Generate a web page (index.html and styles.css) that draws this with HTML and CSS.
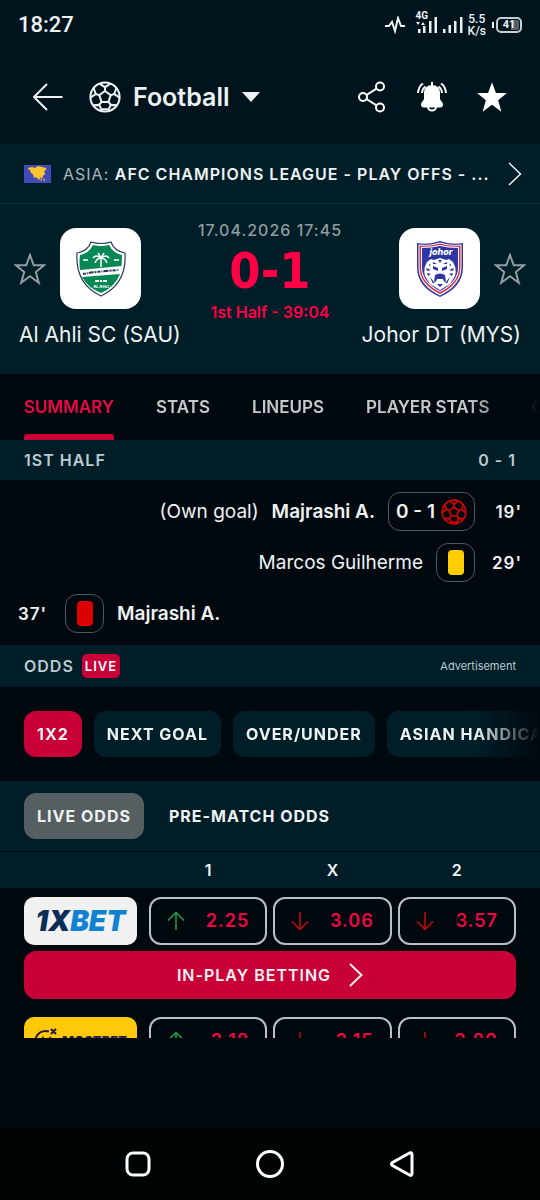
FILE: index.html
```html
<!DOCTYPE html>
<html lang="en">
<head>
    <meta charset="UTF-8">
    <meta name="viewport" content="width=device-width, initial-scale=1.0">
    <title>Al Ahli SC - Johor DT</title>
    <link rel="stylesheet" href="styles.css">
</head>
<body>
    <!-- shared icons -->
    <svg class="sprite" aria-hidden="true">
        <symbol id="ball" viewBox="0 0 32 32">
            <circle cx="16" cy="16" r="14.6"/>
            <path d="M16 10l5.7 4.1-2.2 6.8h-7l-2.2-6.8z"/>
            <path d="M16 10V6.2M21.7 14.1l3.6-1.1M19.5 20.9l2.3 3M12.5 20.9l-2.3 3M10.3 14.1L6.7 13"/>
            <path d="M10.6 2.6L16 6.2l5.4-3.6M27.4 6.8L25.3 13l5.2 3.6M28 24.2l-6.2-.3-2.2 4.6-.4 1.6M4 24.2l6.2-.3 2.2 4.6.4 1.6M4.6 6.8L6.7 13l-5.2 3.6M12.4 28.3h7.2"/>
        </symbol>
        <symbol id="star" viewBox="0 0 32 32">
            <path d="M16 2l3.7 10.300h10.300l-8.200 6.800 3 10.700L16 23.300l-8.800 6.500 3-10.700L2 12.300h10.300z"/>
        </symbol>
        <symbol id="chevron" viewBox="0 0 14 24">
            <path d="M1 1l11.500 11L1 23"/>
        </symbol>
        <symbol id="up" viewBox="0 0 18 20">
            <path d="M9 19V1.500M1 9.500l8-8 8 8"/>
        </symbol>
        <symbol id="down" viewBox="0 0 18 20">
            <path d="M9 1v17.500M1 10.500l8 8 8-8"/>
        </symbol>
    </svg>

    <div class="status-bar">
        <span class="clock">18:27</span>
        <div class="status-icons">
            <svg class="line" width="22" height="18" viewBox="0 0 22 18"><path d="M1 10h4l3-4 3 9 3-13 3 8h4"/></svg>
            <div class="signal">
                <span class="net">4G</span>
                <svg width="22" height="16" viewBox="0 8 22 16"><path d="M2 20h2.500v4H2zM7 17h2.500v7H7zM13 12h2.500v12H13zM18.500 8H21v16h-2.500zM0 13h4l-2 3zM5 16h4l-2-3z"/></svg>
            </div>
            <svg class="bars" width="20" height="16" viewBox="0 0 20 16"><path d="M0 12h2.500v4H0zM5.500 8H8v8H5.500zM11 4h2.500v12H11zM17 0h2.500v16H17z"/></svg>
            <span class="speed">5.5<br>K/s</span>
            <div class="battery"><span class="battery-level">41</span></div>
        </div>
    </div>

    <header class="app-bar">
        <button class="icon-btn" aria-label="Back">
            <svg class="line" width="30" height="28" viewBox="0 0 30 28"><path d="M29.500 14H1M14 1L1 14l13 13"/></svg>
        </button>
        <button class="sport">
            <svg class="line" width="32" height="32"><use href="#ball"/></svg>
            <span>Football</span>
            <svg class="fill" width="18" height="10" viewBox="0 0 18 10"><path d="M0 0h18L9 10z"/></svg>
        </button>
        <div class="actions">
            <button class="icon-btn" aria-label="Share">
                <svg class="line" width="30" height="32" viewBox="0 0 30 32"><circle cx="6" cy="16" r="4"/><circle cx="23" cy="5.500" r="4"/><circle cx="23" cy="26.500" r="4"/><path d="M9.500 14l10-6.300M9.500 18l10 6.300"/></svg>
            </button>
            <button class="icon-btn" aria-label="Notifications">
                <svg class="line" width="32" height="32" viewBox="0 0 32 32">
                    <path class="solid" d="M16 5c-4.500 0-7 3-7 7v6c0 2-3 3.500-3 5.500 0 1.500 1 2 2 2h16c1 0 2-.5 2-2 0-2-3-3.500-3-5.500v-6c0-4-2.500-7-7-7z"/>
                    <path d="M16 1v4M12 26a4 3.500 0 0 0 8 0M7 2.500Q2.500 5.500 2 12M9.500 5.500Q6.500 7.500 6 12M25 2.500q4.500 3 5 9.500M22.500 5.500q3 2 3.500 6.500"/>
                </svg>
            </button>
            <button class="icon-btn" aria-label="Favourite match">
                <svg class="fill" width="34" height="34"><use href="#star"/></svg>
            </button>
        </div>
    </header>

    <a class="league" href="#">
        <svg class="flag" width="27" height="18" viewBox="0 0 27 18">
            <path fill="#434bb8" d="M0 0h27v18H0z"/>
            <path fill="#fdc52c" d="M4 3l4-1 3 1 3-2 4 1 4 1v2l-2 1 1 3-2 2-1 3-2-2-1 3-3-3-2 1-1-4-2-1-1-3-2-1zM15 13l3 2v1l-3-2zM20 13l1 3-2-1z"/>
        </svg>
        <span class="league-name">ASIA: <b>AFC CHAMPIONS LEAGUE - PLAY OFFS - ...</b></span>
        <svg class="line" width="14" height="24"><use href="#chevron"/></svg>
    </a>

    <section class="match">
        <div class="side home">
            <button class="fav" aria-label="Favourite Al Ahli SC"><svg width="32" height="32"><use href="#star"/></svg></button>
            <div class="crest">
                <svg width="52" height="58" viewBox="0 0 52 58">
                    <path fill="#fff" stroke="#26365c" stroke-width="1.200" d="M16 2q10 3 20 0 3 9 14 11 2 31-24 43Q0 44 2 13q11-2 14-11z"/>
                    <path fill="#078854" d="M18 5q8 2 16 0 4 8 13 10 0 5-.5 11L5 30Q4 22 5 15q9-2 13-10z"/>
                    <path fill="#078854" d="M7 37l38-3Q40 47 26 53 13 48 7 37z"/>
                    <path stroke="#fff" stroke-width="1.500" fill="none" d="M26 27V17M26 18q-5-4-8 0M26 18q5-4 8 0M26 18q-4 0-6 5M26 18q4 0 6 5M26 18l-3-5M26 18l3-5M8 20h5M39 20h5"/>
                    <path stroke="#26365c" stroke-width="2" stroke-dasharray="3 1 1 1 5 1 2 1" fill="none" d="M8 34q17-3 36-4"/>
                    <path stroke="#fff" stroke-width="2" stroke-dasharray="4 1 2 1" fill="none" d="M20 41h12"/>
                    <text x="26" y="48" class="crest-name">AL AHLI</text>
                </svg>
            </div>
            <h2 class="team">Al Ahli SC (SAU)</h2>
        </div>
        <div class="result">
            <time class="kickoff">17.04.2026 17:45</time>
            <div class="score">0-1</div>
            <div class="stage">1st Half - 39:04</div>
        </div>
        <div class="side away">
            <div class="crest">
                <svg width="48" height="56" viewBox="0 0 48 56">
                    <path fill="#2e36a3" d="M1 2q12 2 23-2 11 4 23 2v24q0 20-23 30Q1 46 1 26z"/>
                    <path fill="#fff" d="M2.500 3.500q11 1.500 21.500-2 10 3.500 21.500 2V26q0 18-21.500 28.500Q2.500 44 2.500 26z"/>
                    <path fill="#dc2f4a" d="M3.500 4.500q10 1 20.500-2 10 3 20.500 2V26q0 17-20.500 27Q3.500 43 3.500 26z"/>
                    <path fill="#fff" d="M5 6q10 0 19-2 9 2 19 2v20q0 16-19 25Q5 42 5 26z"/>
                    <path fill="#2e36a3" d="M6 7q10 0 18-2 8 2 18 2v19q0 15-18 24Q6 41 6 26z"/>
                    <text x="25" y="14" class="johor">johor</text>
                    <path fill="#fff" d="M11 21l4-3 3 1 6-2 6 2 3-1 4 3q4 7 2 14l-5 8-10 6-10-6-5-8q-2-7 2-14z"/>
                    <path fill="#2e36a3" d="M17 25l5 2v3l-5-2zM31 25l-5 2v3l5-2zM19 34q5-3 10 0l1 8q-3-2-3-4h-6q0 2-3 4zM10 27l5 2-4 1zM38 27l-5 2 4 1zM11 32l4 1-3 2zM37 32l-4 1 3 2zM17 21l4 2h-4zM31 21l-4 2h4zM22 19h4l-2 3zM14 36l4 5-1 2zM34 36l-4 5 1 2zM21 43h6l-3 3zM13 23l2 1-2 1zM35 23l-2 1 2 1z"/>
                </svg>
            </div>
            <button class="fav" aria-label="Favourite Johor DT"><svg width="32" height="32"><use href="#star"/></svg></button>
            <h2 class="team">Johor DT (MYS)</h2>
        </div>
    </section>

    <nav class="tabs">
        <a class="tab active" href="#">SUMMARY</a>
        <a class="tab" href="#">STATS</a>
        <a class="tab" href="#">LINEUPS</a>
        <a class="tab" href="#">PLAYER STATS</a>
        <a class="tab" href="#">ODDS</a>
    </nav>

    <main class="content">
        <h3 class="section-head"><span>1ST HALF</span><span>0 - 1</span></h3>
        <ul class="events">
            <li class="event event-away">
                <span class="note">(Own goal)</span>
                <b>Majrashi A.</b>
                <span class="incident"><b>0 - 1</b><svg class="own-goal" width="26" height="26"><use href="#ball"/></svg></span>
                <span class="minute">19'</span>
            </li>
            <li class="event event-away">
                <span>Marcos Guilherme</span>
                <span class="incident"><i class="card yellow"></i></span>
                <span class="minute">29'</span>
            </li>
            <li class="event">
                <span class="minute">37'</span>
                <span class="incident"><i class="card red"></i></span>
                <b>Majrashi A.</b>
            </li>
        </ul>

        <h3 class="section-head odds-head"><span class="odds-title">ODDS</span><span class="live">LIVE</span><small>Advertisement</small></h3>
        <div class="markets">
            <button class="pill selected">1X2</button>
            <button class="pill">NEXT GOAL</button>
            <button class="pill">OVER/UNDER</button>
            <button class="pill">ASIAN HANDICAP</button>
        </div>
        <div class="odds-type">
            <button class="pill current">LIVE ODDS</button>
            <button class="pill">PRE-MATCH ODDS</button>
        </div>
        <div class="odds-row columns">
            <span></span><span>1</span><span>X</span><span>2</span>
        </div>
        <div class="bookmaker">
            <div class="odds-row">
                <a class="logo xbet" href="#"><span>1X</span><em>BET</em></a>
                <button class="odd rise"><svg width="18" height="20"><use href="#up"/></svg>2.25</button>
                <button class="odd"><svg width="18" height="20"><use href="#down"/></svg>3.06</button>
                <button class="odd"><svg width="18" height="20"><use href="#down"/></svg>3.57</button>
            </div>
            <button class="in-play">IN-PLAY BETTING <svg class="line" width="14" height="24"><use href="#chevron"/></svg></button>
        </div>
        <div class="bookmaker">
            <div class="odds-row">
                <a class="logo mostbet" href="#">
                    <svg width="26" height="26" viewBox="0 0 26 26"><path d="M15 3.500A10.500 10.500 0 1 0 22 12M7 16l2-6 3 4 4-4 1 6M17 1l5 5M22 1l-5 5"/></svg>
                    <span>MOSTBET</span>
                </a>
                <button class="odd rise"><svg width="18" height="20"><use href="#up"/></svg>2.18</button>
                <button class="odd"><svg width="18" height="20"><use href="#down"/></svg>3.15</button>
                <button class="odd"><svg width="18" height="20"><use href="#down"/></svg>3.80</button>
            </div>
        </div>
    </main>

    <div class="ad-slot"></div>

    <div class="system-nav">
        <button class="icon-btn" aria-label="Recent apps"><svg width="28" height="28" viewBox="0 0 28 28"><rect x="3" y="3" width="22" height="22" rx="6"/></svg></button>
        <button class="icon-btn" aria-label="Home"><svg width="28" height="28" viewBox="0 0 28 28"><circle cx="14" cy="14" r="12.500"/></svg></button>
        <button class="icon-btn" aria-label="System back"><svg width="28" height="28" viewBox="0 0 28 28"><path d="M24 4.500v19q0 2.500-2.500 1.500L4.500 15.500q-2-1.500 0-3L21.500 3q2.500-1 2.500 1.500z"/></svg></button>
    </div>
</body>
</html>
```

FILE: styles.css
```css
* {
    box-sizing: border-box;
}
body {
    display: flex;
    flex-direction: column;
    height: 100vh;
    margin: 0;
    overflow: hidden;
    background-color: #01090f;
    color: #eef2f3;
    font-family: Inter, "Liberation Sans", sans-serif;
    font-size: 16px;
    line-height: 20px;
}
a {
    color: inherit;
    text-decoration: none;
}
button {
    padding: 0;
    border: none;
    background: none;
    color: inherit;
    font: inherit;
    cursor: pointer;
}
b {
    font-weight: 600;
}
svg {
    display: block;
    flex: none;
}
.sprite {
    position: absolute;
    width: 0;
    height: 0;
}
.line {
    fill: none;
    stroke: currentColor;
    stroke-width: 2;
}
.fill, .solid {
    fill: currentColor;
}

/* phone status bar */
.status-bar {
    display: flex;
    flex: none;
    justify-content: space-between;
    align-items: center;
    height: 50px;
    padding: 0 18px;
    background-color: #00141e;
    font-family: Roboto, sans-serif;
    font-weight: 500;
}
.clock {
    font-size: 22px;
}
.status-icons {
    display: flex;
    align-items: center;
    gap: 5px;
}
.status-icons svg {
    fill: currentColor;
}
.status-icons .line {
    fill: none;
    margin-right: 5px;
}
.signal {
    position: relative;
}
.net {
    position: absolute;
    top: -7px;
    left: 0;
    font-size: 10px;
    font-weight: 700;
    line-height: 12px;
}
.speed {
    font-size: 12px;
    line-height: 12px;
    text-align: center;
}
.battery {
    position: relative;
    margin-left: 5px;
    padding: 1px;
    border: 2px solid #c5cdd3;
    border-radius: 5px;
}
.battery::before {
    content: "";
    position: absolute;
    top: 3px;
    left: -6px;
    width: 2px;
    height: 6px;
    background-color: #fff;
}
.battery-level {
    display: block;
    width: 20px;
    border-radius: 2px;
    background: linear-gradient(90deg, transparent 60%, #55616a 60%);
    font-size: 11px;
    font-weight: 700;
    line-height: 10px;
    text-align: center;
}

.app-bar {
    display: flex;
    flex: none;
    align-items: center;
    height: 94px;
    padding: 0 32px 0 33px;
    background-color: #00141e;
}
.sport {
    display: flex;
    align-items: center;
    gap: 12px;
    margin-left: 26px;
    font-size: 25px;
    font-weight: 600;
    line-height: 32px;
}
.actions {
    display: flex;
    gap: 28px;
    margin-left: auto;
    color: #fff;
}
.actions .icon-btn {
    display: flex;
    justify-content: center;
    align-items: center;
    width: 32px;
}

.league {
    display: flex;
    flex: none;
    align-items: center;
    gap: 12px;
    height: 60px;
    padding: 0 18px 0 24px;
    border-bottom: 1px solid #0f2d37;
    background-color: #001e28;
}
.league .line {
    stroke-width: 1.5;
}
.league-name {
    flex: 1;
    overflow: hidden;
    color: #a9b7bc;
    letter-spacing: 1px;
    white-space: nowrap;
}
.league-name b {
    color: #eef2f3;
}

.match {
    display: flex;
    flex: none;
    justify-content: space-between;
    height: 170px;
    padding: 16px 14px 0;
    background-color: #001e28;
}
.side {
    display: flex;
    flex: 1 0 0;
    flex-wrap: wrap;
    align-content: flex-start;
    align-items: center;
    gap: 8px 14px;
    padding-top: 8px;
}
.away {
    justify-content: flex-end;
}
.fav svg {
    fill: none;
    stroke: #929ca0;
    stroke-width: 2;
}
.crest {
    display: flex;
    justify-content: center;
    align-items: center;
    width: 81px;
    height: 81px;
    border-radius: 16px;
    background-color: #fff;
}
.crest-name {
    fill: #fff;
    font-size: 4px;
    font-weight: 800;
    text-anchor: middle;
}
.johor {
    fill: #fff;
    font-size: 9px;
    font-style: italic;
    font-weight: 800;
    text-anchor: middle;
}
.team {
    width: 100%;
    margin: 0;
    padding: 0 5px;
    font-size: 21px;
    font-weight: 400;
    line-height: 36px;
    white-space: nowrap;
}
.away .team {
    text-align: right;
}
.result {
    text-align: center;
}
.kickoff {
    display: block;
    color: #929ca0;
    font-weight: 500;
    letter-spacing: 1px;
}
.score {
    color: #ff0046;
    font-family: "DejaVu Sans Condensed", "DejaVu Sans", sans-serif;
    font-size: 50px;
    font-weight: 700;
    line-height: 62px;
}
.stage {
    color: #ff0046;
    font-weight: 600;
}

.tabs {
    display: flex;
    flex: none;
    gap: 42px;
    height: 66px;
    padding: 0 24px;
    overflow: hidden;
    color: #c4c9cc;
    font-size: 17px;
    font-weight: 600;
    white-space: nowrap;
    -webkit-mask-image: linear-gradient(90deg, #000 calc(100% - 72px), transparent);
    mask-image: linear-gradient(90deg, #000 calc(100% - 72px), transparent);
}
.tab {
    position: relative;
    flex: none;
    line-height: 66px;
}
.tab.active {
    color: #f20547;
}
.tab.active::after {
    content: "";
    position: absolute;
    right: 0;
    bottom: 0;
    left: 0;
    height: 6px;
    border-radius: 3px 3px 0 0;
    background-color: #c80037;
}

.content {
    flex: 1;
    min-height: 0;
    overflow: hidden;
}
.section-head {
    display: flex;
    justify-content: space-between;
    align-items: center;
    height: 40px;
    margin: 0;
    padding: 0 24px;
    background-color: #001e28;
    color: #bccbcf;
    font-size: 16px;
    font-weight: 600;
    letter-spacing: 1px;
}
.events {
    display: flex;
    flex-direction: column;
    gap: 12px;
    margin: 0;
    padding: 12px 18px;
    list-style: none;
    font-size: 19px;
}
.event {
    display: flex;
    align-items: center;
    gap: 13px;
}
.event-away {
    justify-content: flex-end;
}
.incident {
    display: flex;
    justify-content: center;
    align-items: center;
    gap: 6px;
    min-width: 39px;
    height: 39px;
    padding: 0 7px;
    border: 1px solid #4d595f;
    border-radius: 12px;
}
.own-goal {
    fill: none;
    stroke: #d80000;
    stroke-width: 2;
}
.card {
    width: 16px;
    height: 25px;
    border-radius: 4px;
}
.yellow {
    background-color: #ffcd00;
}
.red {
    background-color: #dc0000;
}
.minute {
    width: 34px;
    font-size: 17px;
    font-weight: 600;
    letter-spacing: 1px;
}
.event-away .minute {
    text-align: right;
}

.odds-head {
    justify-content: flex-start;
    gap: 8px;
    height: 42px;
}
.odds-title {
    font-weight: 600;
}
.live {
    padding: 0 3px;
    border-radius: 5px;
    background-color: #c80037;
    color: #fff;
    font-size: 13px;
    line-height: 24px;
}
.odds-head small {
    margin-left: auto;
    font-size: 11px;
    font-weight: 400;
    letter-spacing: normal;
}
.markets, .odds-type {
    display: flex;
    gap: 12px;
    padding: 24px;
    overflow: hidden;
}
.markets {
    -webkit-mask-image: linear-gradient(90deg, #000 calc(100% - 64px), transparent);
    mask-image: linear-gradient(90deg, #000 calc(100% - 64px), transparent);
}
.odds-type {
    padding: 12px 24px;
    border-bottom: 1px solid #01090f;
    background-color: #001e28;
}
.pill {
    flex: none;
    height: 46px;
    padding: 0 13px;
    border-radius: 12px;
    background-color: #001e28;
    font-weight: 700;
    letter-spacing: 1px;
}
.pill.selected {
    background-color: #c80037;
}
.pill.current {
    background-color: #555e61;
}
.odds-row {
    display: grid;
    grid-template-columns: 119px 1fr 1fr 1fr;
    gap: 6px;
}
.columns {
    padding: 0 24px;
    background-color: #001e28;
    font-weight: 600;
    line-height: 36px;
    text-align: center;
}
.bookmaker {
    padding: 9px 24px;
}
.logo {
    display: flex;
    justify-content: center;
    align-items: center;
    height: 48px;
    margin-right: 6px;
    border-radius: 10px;
}
.xbet {
    background-color: #f1f1f1;
    color: #0b2e56;
    font-size: 28px;
    font-style: italic;
    font-weight: 900;
}
.xbet em {
    color: #0f83d2;
}
.mostbet {
    gap: 2px;
    background-color: #ffc808;
    color: #241a52;
    font-size: 13px;
    font-weight: 800;
}
.mostbet svg {
    fill: none;
    stroke: currentColor;
    stroke-width: 2;
}
.odd {
    display: flex;
    justify-content: space-between;
    align-items: center;
    height: 48px;
    padding: 0 16px;
    border: 2px solid #b9c1c7;
    border-radius: 12px;
    color: #f00546;
    font-size: 18px;
    font-weight: 600;
    letter-spacing: 1px;
}
.odd svg {
    fill: none;
    stroke: #c80808;
    stroke-width: 1.5;
}
.odd.rise svg {
    stroke: #1fa046;
}
.in-play {
    display: flex;
    justify-content: center;
    align-items: center;
    gap: 18px;
    width: 100%;
    height: 48px;
    margin-top: 6px;
    border-radius: 12px;
    background-color: #c80037;
    font-weight: 600;
    letter-spacing: 1px;
}

.ad-slot {
    flex: none;
    height: 90px;
    background-color: #01090f;
}
.system-nav {
    display: flex;
    flex: none;
    justify-content: center;
    align-items: center;
    gap: 104px;
    height: 72px;
    background-color: #000405;
}
.system-nav svg {
    fill: none;
    stroke: #fff;
    stroke-width: 3;
}
```
